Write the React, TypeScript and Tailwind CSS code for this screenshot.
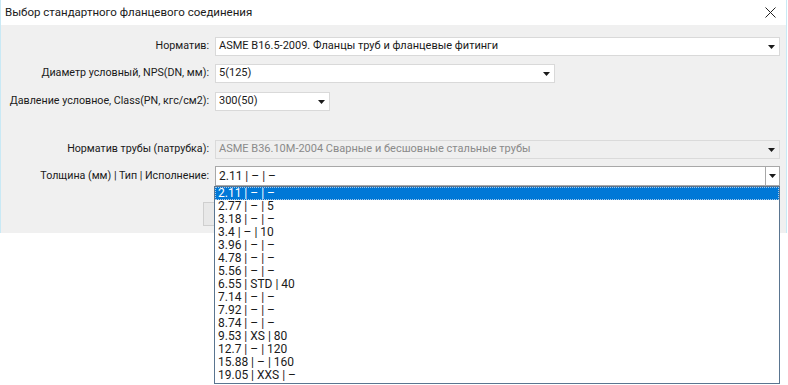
import React from "react";

const font = { fontFamily: 'Roboto, "Noto Sans", sans-serif' };

function Arrow({ className = "" }: { className?: string }) {
  return (
    <svg width="7" height="4" viewBox="0 0 7 4" className={className}>
      <path d="M0 0 H7 L3.5 4 Z" fill="#1a1a1a" />
    </svg>
  );
}

const items = [
  "2.11 | – | –",
  "2.77 | – | 5",
  "3.18 | – | –",
  "3.4 | – | 10",
  "3.96 | – | –",
  "4.78 | – | –",
  "5.56 | – | –",
  "6.55 | STD | 40",
  "7.14 | – | –",
  "7.92 | – | –",
  "8.74 | – | –",
  "9.53 | XS | 80",
  "12.7 | – | 120",
  "15.88 | – | 160",
  "19.05 | XXS | –",
];

export default function App() {
  return (
    <div
      className="relative w-[788px] h-[385px] bg-white overflow-hidden text-[11px] text-[#1a1a1a] whitespace-nowrap"
      style={font}
    >
      <div className="w-[787px] border-l border-r border-[#c9e9f5] flex flex-col">
        {/* Title bar */}
        <div className="h-[25px] bg-white flex items-center justify-between pl-[4px] pr-[10px]">
          <span className="text-[11.5px] leading-none">Выбор стандартного фланцевого соединения</span>
          <svg width="11" height="11" viewBox="0 0 11 11">
            <path d="M0.5 0.5 L10.5 10.5 M10.5 0.5 L0.5 10.5" stroke="#222" strokeWidth="1" />
          </svg>
        </div>
        {/* Body */}
        <div className="h-[208px] bg-[#f0f0f0] flex flex-col pt-[12px]">
          <div className="flex items-center h-[19px]">
            <div className="w-[210px] text-right pr-[2px] text-[10.7px]">Норматив:</div>
            <div className="ml-[4px] w-[565px] h-[19px] bg-white border border-[#d9d9d9] flex items-center justify-between pl-[3px] pr-[4px]">
              <span>ASME B16.5-2009. Фланцы труб и фланцевые фитинги</span>
              <Arrow />
            </div>
          </div>
          <div className="flex items-center h-[19px] mt-[8px]">
            <div className="w-[210px] text-right pr-[2px] text-[10.7px]">Диаметр условный, NPS(DN, мм):</div>
            <div className="ml-[4px] w-[340px] h-[19px] bg-white border border-[#d9d9d9] flex items-center justify-between pl-[3px] pr-[4px]">
              <span>5(125)</span>
              <Arrow />
            </div>
          </div>
          <div className="flex items-center h-[19px] mt-[9px]">
            <div className="w-[210px] text-right pr-[2px] text-[10.7px]">Давление условное, Class(PN, кгс/см2):</div>
            <div className="ml-[4px] w-[115px] h-[19px] bg-white border border-[#d9d9d9] flex items-center justify-between pl-[3px] pr-[4px]">
              <span>300(50)</span>
              <Arrow />
            </div>
          </div>
          <div className="flex items-center h-[19px] mt-[29px]">
            <div className="w-[210px] text-right pr-[2px] text-[10.7px]">Норматив трубы (патрубка):</div>
            <div className="ml-[4px] w-[565px] h-[19px] bg-[#efefef] border border-[#dadada] flex items-center justify-between pl-[3px] pr-[4px]">
              <span className="text-[#8a8a8a]">ASME B36.10M-2004 Сварные и бесшовные стальные трубы</span>
              <Arrow />
            </div>
          </div>
          <div className="flex items-center h-[20px] mt-[7px]">
            <div className="w-[210px] text-right pr-[2px] text-[10.7px]">Толщина (мм) | Тип | Исполнение:</div>
            <div className="ml-[4px] w-[565px] h-[20px] bg-white border border-[#a8a8a8] flex items-center justify-between pl-[3px] text-[12px]">
              <span>2.11 | – | –</span>
              <div className="w-[14px] h-full border-l border-[#a8a8a8] flex items-center justify-center">
                <Arrow />
              </div>
            </div>
          </div>
          <div className="ml-[202px] mt-[16px] w-[80px] h-[24px] bg-[#e8e8e8] border border-[#cfcfcf]" />
        </div>
      </div>

      {/* Dropdown list */}
      <div className="absolute left-[214px] top-[186px] w-[566px] h-[198px] bg-white border border-[#5a7590] text-[12px]">
        <div className="h-[13px] bg-[#0078d7] text-white pl-[3px] leading-[13px] outline-1 outline-dotted outline-offset-[-1px] outline-[#a8c8e8]">
          {items[0]}
        </div>
        {items.slice(1).map((t) => (
          <div key={t} className="h-[13px] pl-[3px] leading-[13px]">
            {t}
          </div>
        ))}
      </div>
    </div>
  );
}
